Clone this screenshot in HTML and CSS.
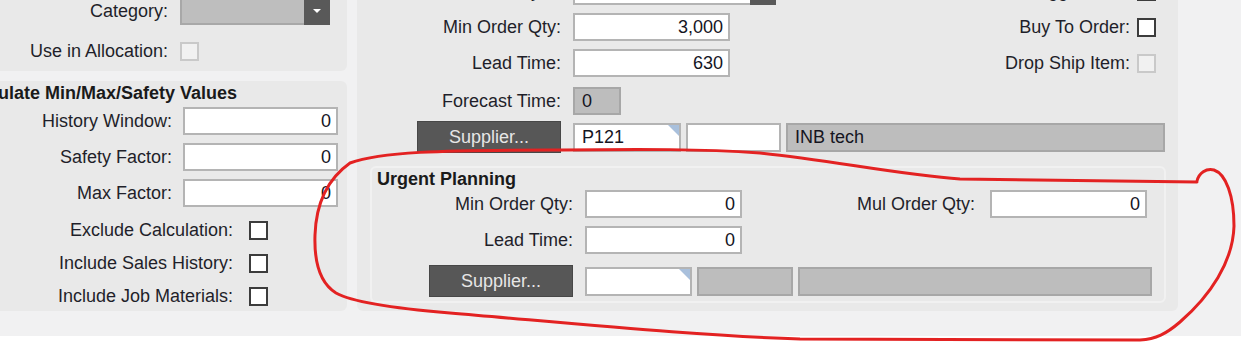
FILE: index.html
```html
<!DOCTYPE html>
<html lang="en">
  <head>
    <meta charset="UTF-8" />
    <meta name="viewport" content="width=device-width, initial-scale=1" />
    <title>Part Planning</title>
    <link rel="stylesheet" href="styles.css">
  </head>
  <body>
    <div id="screen">
      <div id="view">
        <div id="leftCol">
          <div class="panel" id="partPanel">
            <div class="row">
              <label class="lbl lbl-part">Category:</label>
              <div class="combo ro"><span class="combo-btn"></span></div>
            </div>
            <div class="row">
              <label class="lbl lbl-part">Use in Allocation:</label>
              <span class="check disabled"></span>
            </div>
          </div>

          <div class="panel" id="calcPanel">
            <h3>Calculate Min/Max/Safety Values</h3>
            <div class="stack">
              <div class="row">
                <label class="lbl lbl-calc">History Window:</label>
                <div class="field num">0</div>
              </div>
              <div class="row">
                <label class="lbl lbl-calc">Safety Factor:</label>
                <div class="field num">0</div>
              </div>
              <div class="row">
                <label class="lbl lbl-calc">Max Factor:</label>
                <div class="field num">0</div>
              </div>
            </div>
            <div class="stack checks">
              <div class="row short">
                <label class="lbl lbl-check">Exclude Calculation:</label>
                <span class="check"></span>
              </div>
              <div class="row short">
                <label class="lbl lbl-check">Include Sales History:</label>
                <span class="check"></span>
              </div>
              <div class="row short">
                <label class="lbl lbl-check">Include Job Materials:</label>
                <span class="check"></span>
              </div>
            </div>
          </div>
        </div>

        <div class="panel" id="planPanel">
          <div class="plan-top">
            <div class="stack">
              <div class="row">
                <label class="lbl lbl-plan">Buyer:</label>
                <div class="combo"><span class="combo-btn"></span></div>
              </div>
              <div class="row">
                <label class="lbl lbl-plan">Min Order Qty:</label>
                <div class="field num">3,000</div>
              </div>
              <div class="row">
                <label class="lbl lbl-plan">Lead Time:</label>
                <div class="field num">630</div>
              </div>
              <div class="row forecast">
                <label class="lbl lbl-plan">Forecast Time:</label>
                <div class="field ro tiny">0</div>
              </div>
            </div>
            <div class="stack flags">
              <div class="row">
                <label class="lbl">Generate Suggestions:</label>
                <span class="check"></span>
              </div>
              <div class="row">
                <label class="lbl">Buy To Order:</label>
                <span class="check"></span>
              </div>
              <div class="row">
                <label class="lbl">Drop Ship Item:</label>
                <span class="check disabled"></span>
              </div>
            </div>
          </div>

          <div class="sup-row" id="supMain">
            <button class="btn">Supplier...</button>
            <div class="field lookup w-id">P121</div>
            <div class="field w-sub"></div>
            <div class="field ro w-name">INB tech</div>
          </div>

          <div id="urgent">
            <h3>Urgent Planning</h3>
            <div class="row">
              <label class="lbl lbl-urgent">Min Order Qty:</label>
              <div class="field num">0</div>
              <label class="lbl lbl-mul">Mul Order Qty:</label>
              <div class="field num">0</div>
            </div>
            <div class="row gap-row">
              <label class="lbl lbl-urgent">Lead Time:</label>
              <div class="field num">0</div>
            </div>
            <div class="sup-row" id="supUrgent">
              <button class="btn">Supplier...</button>
              <div class="field lookup w-id2"></div>
              <div class="field ro w-sub2"></div>
              <div class="field ro w-name2"></div>
            </div>
          </div>
        </div>
      </div>
    </div>

    <!-- hand-drawn markup over the screenshot -->
    <svg id="markup" width="1241" height="342" viewBox="0 0 1241 342">
      <path d="M1197 181 C1199 173 1206 168 1214 170 C1226 174 1234 196 1234 226
               C1233 262 1210 296 1180 322 C1166 334 1156 339 1140 340
               L800 339 C700 336 580 324 450 313 C390 308 352 302 336 293
               C320 283 314 264 315 235 C316 206 326 180 350 163
               C380 152 440 150 550 150 C650 149 700 149 760 153
               C830 160 900 175 960 179 L1197 182"
            fill="none" stroke="#e32222" stroke-width="3" stroke-linecap="round" stroke-linejoin="round" />
    </svg>
  </body>
</html>
```

FILE: styles.css
```css
* {
  box-sizing: border-box;
}
body {
  margin: 0;
  height: 342px;
  position: relative;
  overflow: hidden;
  background: #fff;
  font-family: "Liberation Sans", Arial, sans-serif;
  font-size: 18px;
  color: #1f1f2a;
}
#screen {
  height: 336px;
  background: #f1f1f2;
  overflow: hidden;
}
#view {
  display: flex;
  align-items: flex-start;
  gap: 10px;
  margin-left: -44px;
  margin-top: -30px;
}
.panel {
  background: #e9e9e9;
  border-radius: 6px;
}
h3 {
  margin: 0;
  font-size: 18px;
  line-height: 20px;
  font-weight: bold;
  color: #1a1a1a;
}

/* rows, labels */
.row {
  display: flex;
  align-items: center;
  height: 28px;
  line-height: 28px;
}
.row.short {
  height: 24px;
  line-height: 24px;
}
.stack {
  display: flex;
  flex-direction: column;
  gap: 8px;
}
.lbl {
  flex: none;
  text-align: right;
  white-space: nowrap;
}

/* left column */
#leftCol {
  width: 391px;
  display: flex;
  flex-direction: column;
  gap: 10px;
}
#partPanel {
  display: flex;
  flex-direction: column;
  gap: 12px;
  padding: 27px 0 6px;
}
.lbl-part {
  width: 212px;
  margin-right: 12px;
}
#calcPanel {
  padding: 2px 0 3px;
}
#calcPanel h3 {
  padding-left: 4px;
  margin-bottom: 4px;
}
.lbl-calc {
  width: 216px;
  margin-right: 11px;
}
.checks {
  gap: 9px;
  margin-top: 11px;
}
.lbl-check {
  width: 277px;
  margin-right: 16px;
}

/* inputs */
.field {
  flex: none;
  width: 157px;
  height: 28px;
  background: #fff;
  border: 2px solid #b4b4b4;
  padding: 0 5px;
  line-height: 24px;
  color: #15151f;
}
.field.num {
  text-align: right;
}
#calcPanel .field {
  width: 155px;
}
.field.ro {
  background: #bdbdbd;
  border-color: #a7a7a7;
}
.field.tiny {
  width: 48px;
  padding-left: 7px;
}
.combo {
  flex: none;
  position: relative;
  width: 203px;
  height: 28px;
  background: #fff;
  border: 2px solid #b4b4b4;
}
.combo.ro {
  width: 150px;
  background: #bebebe;
  border-color: #a8a8a8;
}
.combo-btn {
  position: absolute;
  top: -2px;
  right: -2px;
  bottom: -2px;
  width: 26px;
  background: #595959;
}
.combo-btn::after {
  content: "";
  position: absolute;
  left: 9px;
  top: 12px;
  border-left: 4px solid transparent;
  border-right: 4px solid transparent;
  border-top: 4px solid #fff;
}
.check {
  flex: none;
  width: 19px;
  height: 19px;
  background: #fff;
  border: 2px solid #3c3c3c;
}
.check.disabled {
  background: #f1f1f1;
  border-color: #c9c9c9;
}

/* plan panel */
#planPanel {
  width: 821px;
  padding: 7px 13px 8px 0;
}
.plan-top {
  display: flex;
  justify-content: space-between;
}
.lbl-plan {
  width: 204px;
  margin-right: 12px;
}
.forecast {
  margin-top: 2px;
}
.flags {
  margin-right: 9px;
  align-items: flex-end;
}
.flags .lbl {
  margin-right: 7px;
}
.sup-row {
  display: flex;
  align-items: center;
  gap: 5px;
  height: 32px;
}
#supMain {
  margin: 6px 0 0 60px;
}
.btn {
  flex: none;
  width: 144px;
  height: 32px;
  margin-right: 7px;
  padding: 0;
  background: #575757;
  border: 1px solid #474747;
  color: #e6e6e6;
  font: inherit;
}
.sup-row .field {
  height: 29px;
  padding-left: 7px;
}
.lookup {
  position: relative;
}
.lookup::after {
  content: "";
  position: absolute;
  top: 0;
  right: 0;
  border-top: 11px solid #a9c0dc;
  border-left: 11px solid transparent;
}
.w-id { width: 108px; }
.w-sub { width: 95px; }
.w-name { width: 379px; }
.w-id2 { width: 107px; }
.w-sub2 { width: 96px; }
.w-name2 { width: 354px; }

/* urgent planning group */
#urgent {
  margin: 13px -1px 0 13px;
  padding: 1px 0 4px;
  border: 2px solid #f1f1f1;
  border-radius: 6px;
}
#urgent h3 {
  padding-left: 5px;
  margin-bottom: 1px;
}
.lbl-urgent {
  width: 201px;
  margin-right: 12px;
}
.lbl-mul {
  margin-left: auto;
  margin-right: 15px;
}
#urgent .row .field:last-child {
  margin-right: 17px;
}
#urgent .gap-row {
  margin-top: 8px;
}
#supUrgent {
  margin: 11px 0 0 57px;
}

#markup {
  position: absolute;
  top: 0;
  left: 0;
  pointer-events: none;
}
```
